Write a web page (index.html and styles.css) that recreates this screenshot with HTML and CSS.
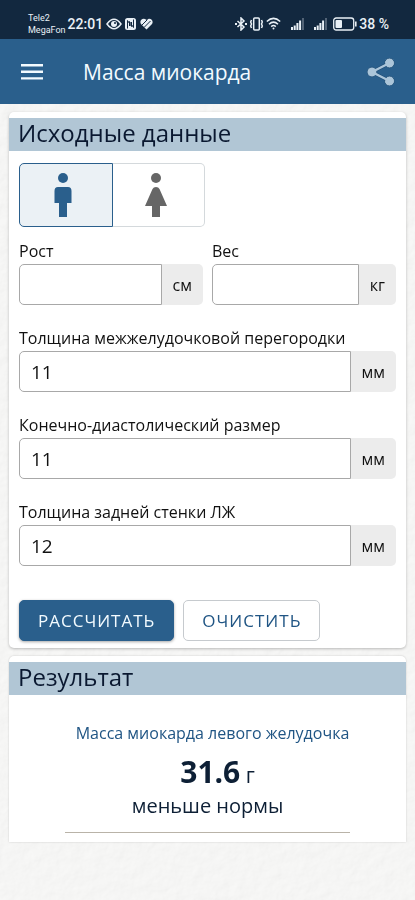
FILE: index.html
```html
<!DOCTYPE html>
<html lang="ru">
<head>
<meta charset="utf-8">
<meta name="viewport" content="width=device-width, initial-scale=1">
<title>Масса миокарда</title>
<link rel="stylesheet" href="styles.css">
</head>
<body>
<svg class="paper" aria-hidden="true">
  <filter id="grain" color-interpolation-filters="sRGB">
    <feTurbulence type="fractalNoise" baseFrequency="0.09" numOctaves="4" seed="8" result="noise"/>
    <feDiffuseLighting in="noise" surfaceScale="0.3" lighting-color="#f9f9f8">
      <feDistantLight azimuth="225" elevation="80"/>
    </feDiffuseLighting>
  </filter>
  <rect width="100%" height="100%" filter="url(#grain)"/>
</svg>

<div class="status">
  <div class="carriers"><span>Tele2</span><span>MegaFon</span></div>
  <span class="clock">22:01</span>
  <svg class="eye" width="16" height="12" viewBox="0 0 16 12"><path d="M1 6Q8-3.500 15 6Q8 15.500 1 6Z" fill="none" stroke="currentColor" stroke-width="1.500"/><circle cx="8" cy="6" r="3" fill="currentColor"/><circle cx="9" cy="5" r="1" fill="#12283f"/></svg>
  <svg class="nfc" width="11" height="12" viewBox="0 0 11 12"><rect width="11" height="12" rx="2.500" fill="currentColor"/><path d="M2.500 10.500V2.500L6.500 8.500V4M8.500 1.500V9.500L4.500 3.500V8" fill="none" stroke="#12283f" stroke-width="1"/></svg>
  <svg class="health" width="13" height="12" viewBox="0 0 13 12"><path d="M6.500 11.500L1.200 6.200C-1.500 2.500 3-1.200 6.500 2C10-1.200 14.500 2.500 11.800 6.200Z" fill="currentColor"/><path d="M1.500 7.500L7.500 1.500M4 9.500L10.500 3" fill="none" stroke="#12283f" stroke-width="1"/></svg>
  <div class="system">
    <svg width="12" height="14" viewBox="0 0 12 14" fill="none" stroke="currentColor" stroke-width="1.500"><path d="M2.500 4L9 10L6 13V1L9 4L2.500 10"/><path d="M0 7h2M10 7h2" stroke-width="1.800"/></svg>
    <svg width="15" height="14" viewBox="0 0 15 14" fill="none" stroke="currentColor" stroke-width="1.500"><rect x="4.700" y="1" width="5.600" height="12" rx="1"/><path d="M2.500 3l-.8 2 .8 2-.8 2 .8 2M12.500 3l.8 2-.8 2 .8 2-.8 2"/></svg>
    <svg width="15" height="13" viewBox="0 0 15 13" fill="none" stroke="currentColor" stroke-width="1.500"><path d="M.8 4.500Q7.500-1.800 14.200 4.500M3 7.200Q7.500 3 12 7.200M5.200 9.600Q7.500 7.500 9.800 9.600"/><circle cx="7.500" cy="11.500" r="1" fill="currentColor" stroke="none"/></svg>
    <svg class="signal" width="13" height="12" viewBox="0 0 13 12" fill="currentColor"><path d="M0 9h2v3H0zM2.700 7.500h2V12h-2zM5.400 5h2v7h-2zM8.100 2.500h2V12h-2z"/><path d="M11 0h2v12h-2z" opacity=".3"/></svg>
    <svg class="signal" width="13" height="12" viewBox="0 0 13 12" fill="currentColor"><path d="M0 9h2v3H0zM2.700 7.500h2V12h-2zM5.400 5h2v7h-2zM8.100 2.500h2V12h-2z"/><path d="M11 0h2v12h-2z" opacity=".3"/></svg>
    <svg class="battery" width="24" height="14" viewBox="0 0 24 14"><rect x=".7" y="1" width="20" height="12" rx="2.500" fill="none" stroke="currentColor" stroke-width="1.300"/><rect x="2.500" y="3" width="6.500" height="8" rx="1" fill="currentColor"/><path d="M22.800 4.500v5" stroke="currentColor" stroke-width="1.600"/></svg>
    <span class="charge">38 %</span>
  </div>
</div>

<header class="appbar">
  <button class="icon-button" type="button" aria-label="Меню">
    <svg width="22" height="16" viewBox="0 0 22 16" fill="currentColor"><path d="M0 0h22v2.400H0zM0 6.600h22V9H0zM0 13.200h22v2.400H0z"/></svg>
  </button>
  <h1>Масса миокарда</h1>
  <button class="icon-button share" type="button" aria-label="Поделиться">
    <svg width="28" height="28" viewBox="0 0 28 28"><g fill="#abc5d9" stroke="#1d4b74" stroke-width=".8"><circle cx="22.500" cy="5" r="4.800"/><circle cx="5" cy="14" r="4.800"/><circle cx="22.500" cy="23" r="4.800"/></g><path d="M20.500 6L7 13M7 15L20.500 22" fill="none" stroke="#1d4b74" stroke-width="3.400"/><path d="M22.500 5L5 14L22.500 23" fill="none" stroke="#abc5d9" stroke-width="2.400"/><g fill="#abc5d9"><circle cx="22.500" cy="5" r="4.300"/><circle cx="5" cy="14" r="4.300"/><circle cx="22.500" cy="23" r="4.300"/></g></svg>
  </button>
</header>

<main>
  <form class="card">
    <h2>Исходные данные</h2>
    <div class="form-body">
      <div class="gender" role="radiogroup" aria-label="Пол">
        <label><input type="radio" name="gender" value="m" aria-label="Мужской" checked>
          <svg width="18" height="44" viewBox="0 0 18 44" fill="currentColor"><circle cx="9" cy="5" r="5"/><path d="M4 14H14Q17.500 14 17.500 18V30H13V44H5V30H.5V18Q.5 14 4 14Z"/></svg>
        </label>
        <label><input type="radio" name="gender" value="f" aria-label="Женский">
          <svg width="22" height="44" viewBox="0 0 22 44" fill="currentColor"><circle cx="11" cy="5" r="5"/><path d="M7.500 16Q8.500 14 11 14T14.500 16L22 33H15V44H7V33H0Z"/></svg>
        </label>
      </div>
      <div class="pair">
        <div class="field"><label for="height">Рост</label><div class="group"><input id="height" type="text" inputmode="decimal"><span>см</span></div></div>
        <div class="field"><label for="weight">Вес</label><div class="group"><input id="weight" type="text" inputmode="decimal"><span>кг</span></div></div>
      </div>
      <div class="field"><label for="septum">Толщина межжелудочковой перегородки</label><div class="group"><input id="septum" type="text" inputmode="decimal" value="11"><span>мм</span></div></div>
      <div class="field"><label for="diastolic">Конечно-диастолический размер</label><div class="group"><input id="diastolic" type="text" inputmode="decimal" value="11"><span>мм</span></div></div>
      <div class="field"><label for="wall">Толщина задней стенки ЛЖ</label><div class="group"><input id="wall" type="text" inputmode="decimal" value="12"><span>мм</span></div></div>
      <div class="actions">
        <button class="primary" type="button">РАССЧИТАТЬ</button>
        <button class="secondary" type="reset">ОЧИСТИТЬ</button>
      </div>
    </div>
  </form>

  <section class="card result-card">
    <h2>Результат</h2>
    <div class="result">
      <h3>Масса миокарда левого желудочка</h3>
      <p class="value"><strong>31.6</strong> г</p>
      <p class="verdict">меньше нормы</p>
      <hr>
    </div>
  </section>
</main>
</body>
</html>
```
FILE: styles.css
```css
* { box-sizing: border-box; }

body {
  margin: 0;
  min-height: 100vh;
  background: #f5f5f4;
  color: #111;
  font-family: "Open Sans", "Noto Sans", sans-serif;
  font-size: 16px;
}

h1, h2, h3, p { margin: 0; font-weight: 400; }
button, input { font: inherit; }
svg { display: block; flex: none; }

.paper {
  position: fixed;
  inset: 0;
  width: 100%;
  height: 100%;
  z-index: -1;
}

.status {
  display: flex;
  align-items: center;
  height: 39px;
  padding: 8px 26px 0 28px;
  background: #12283f;
  color: #e9f0f6;
  font-family: Roboto, sans-serif;
}
.carriers {
  display: flex;
  flex-direction: column;
  font-size: 9px;
  line-height: 12px;
}
.clock { margin-left: 2px; font-size: 14px; font-weight: 500; }
.eye { margin-left: 3px; }
.nfc { margin-left: 3px; }
.health { margin-left: 4px; }
.system {
  display: flex;
  align-items: center;
  margin-left: auto;
  font-size: 14px;
  font-weight: 500;
}
.system svg { margin-right: 2px; }
.system .signal { margin-left: 8px; }
.system .battery { margin-left: 4px; }

.appbar {
  display: flex;
  align-items: center;
  height: 65px;
  padding: 0 20px 0 21px;
  background: #2a5f8c;
  color: #f3fbff;
}
.appbar h1 { flex: 1; margin-left: 40px; font-size: 21px; line-height: 28px; }
.icon-button { padding: 0; border: 0; background: none; color: inherit; }

main { padding: 8px 9px 58px; }

.card {
  padding: 6px 0 7px;
  background: #fff;
  border-radius: 5px;
  box-shadow: 0 1px 3px rgba(0, 0, 0, .25);
}
.card h2 {
  height: 33px;
  padding-left: 9px;
  background: #b1c6d5;
  color: #0a1830;
  font-size: 24px;
  line-height: 30px;
}
.form-body { padding: 12px 10px 0 10px; }

.gender { display: flex; width: 186px; height: 64px; }
.gender label {
  position: relative;
  display: flex;
  flex: 1;
  align-items: center;
  justify-content: center;
  padding-right: 5px;
  border: 1px solid #d4d9dc;
  border-left: 0;
  border-radius: 0 5px 5px 0;
  color: #666;
}
.gender label:first-child { border-left: 1px solid #d4d9dc; border-radius: 5px 0 0 5px; }
.gender label:has(input:checked) { border-color: #2a5f8c; background: #ebf1f5; color: #2a5f8c; }
.gender input {
  position: absolute;
  inset: 0;
  margin: 0;
  opacity: 0;
}

.pair { display: grid; grid-template-columns: minmax(0, 1fr) minmax(0, 1fr); gap: 9px; }
.field { padding-top: 11px; }
.field label { display: block; height: 26px; font-size: 16px; line-height: 26px; }
.group { display: flex; height: 41px; margin-bottom: 9px; }
.group input {
  flex: 1;
  min-width: 0;
  padding: 0 11px;
  border: 1px solid #a8a8a8;
  border-radius: 5px 0 0 5px;
  background: #fff;
  color: #111;
  font-size: 19px;
}
.group span {
  display: flex;
  align-items: center;
  padding: 0 11px;
  border-radius: 0 5px 5px 0;
  background: #ececec;
}

.actions { display: flex; gap: 9px; padding-top: 25px; }
.actions button {
  height: 41px;
  padding: 0 18px;
  border: 1px solid #c6cace;
  border-radius: 5px;
  background: #fff;
  color: #205584;
  font-size: 17px;
  letter-spacing: 1px;
}
.actions .primary {
  border-color: #2a5f8c;
  background: #2a5f8c;
  color: #f3fbff;
  box-shadow: 0 1px 3px rgba(0, 0, 0, .35);
}

.result-card {
  margin-top: 8px;
  padding-bottom: 9px;
  border-radius: 5px 5px 0 0;
  box-shadow: 0 0 2px rgba(0, 0, 0, .2);
}
.result { padding: 25px 0 0; text-align: center; color: #0d1f35; }
.result h3 { padding-left: 10px; color: #205584; font-size: 16px; line-height: 26px; }
.value { margin-top: 8px; padding-left: 20px; font-size: 21px; line-height: 36px; }
.value strong { font-size: 30px; }
.verdict { font-size: 20px; line-height: 26px; }
.result hr { width: 72%; margin: 13px auto 0; border: 0; border-top: 1px solid #b9b3a8; }
```
